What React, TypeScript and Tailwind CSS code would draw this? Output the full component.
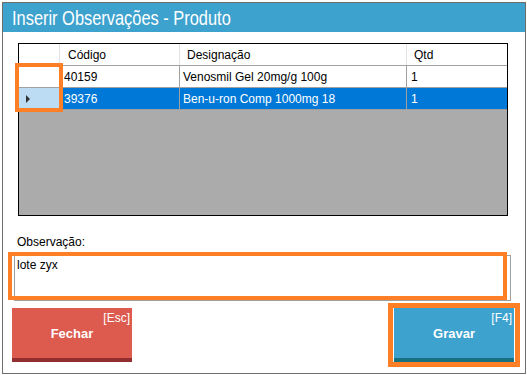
const rows = [
  { codigo: "40159", designacao: "Venosmil Gel 20mg/g 100g", qtd: "1", selected: false },
  { codigo: "39376", designacao: "Ben-u-ron Comp 1000mg 18", qtd: "1", selected: true },
];

function ActionButton({ label, hotkey, color }: { label: string; hotkey: string; color: "red" | "blue" }) {
  const tone =
    color === "red"
      ? "bg-[#dc5a4e] border-[#922d30]"
      : "bg-[#3da2ce] border-[#17717f]";
  return (
    <button className={`relative w-[120px] h-[54px] border-b-4 ${tone} text-white`}>
      <span className="absolute top-[3px] right-[2px] text-[12px] leading-[14px]">{hotkey}</span>
      <span className="block pt-[2px] text-[13px] font-bold leading-[16px]">{label}</span>
    </button>
  );
}

export default function App() {
  return (
    <div className="w-[527px] h-[375px] bg-white pt-[2px] pl-[2px] font-['Liberation_Sans',Arial,sans-serif] text-black">
      <div className="relative w-[524px] h-[372px] border border-[#6f6f6f] flex flex-col">
        {/* Title (narrow face, squeezed since Arial Narrow isn't available) */}
        <div className="h-[29px] bg-[#3da2ce] pl-[9px] flex items-center">
          <span className="inline-block origin-left scale-x-[0.82] whitespace-nowrap text-white text-[20px] leading-[24px]">
            Inserir Observações - Produto
          </span>
        </div>

        {/* Grid */}
        <div className="ml-[15px] mt-[11px] w-[490px] h-[173px] border border-black bg-[#ababab] text-[12px]">
          <div className="flex h-[22px] bg-white border-b border-[#a0a0a0]">
            <div className="w-[41px] border-r border-[#e3e3e3]" />
            <div className="w-[120px] border-r border-[#e3e3e3] pl-[8px] flex items-center">Código</div>
            <div className="w-[227px] border-r border-[#e3e3e3] pl-[7px] flex items-center">Designação</div>
            <div className="w-[100px] pl-[7px] flex items-center">Qtd</div>
          </div>
          {rows.map((r) => (
            <div
              key={r.codigo}
              className={`flex h-[22px] border-b border-[#a0a0a0] ${r.selected ? "bg-[#0078d7] text-white" : "bg-white"}`}
            >
              <div className={`w-[41px] border-r border-[#a0a0a0] flex items-center pl-[6px] ${r.selected ? "bg-[#bcdcf4]" : "bg-white"}`}>
                {r.selected && (
                  <svg width="6" height="10" viewBox="0 0 6 10">
                    <path d="M1 1 L5 5 L1 9 Z" fill="#333" />
                  </svg>
                )}
              </div>
              <div className="w-[120px] border-r border-[#a0a0a0] pl-[4px] flex items-center">{r.codigo}</div>
              <div className="w-[227px] border-r border-[#a0a0a0] pl-[3px] flex items-center">{r.designacao}</div>
              <div className="w-[100px] pl-[4px] flex items-center">{r.qtd}</div>
            </div>
          ))}
        </div>

        {/* Observation */}
        <label className="ml-[14px] mt-[19px] text-[12px] leading-[14px]">Observação:</label>
        <div className="ml-[11px] mt-[6px] w-[497px] h-[46px] border border-[#a0a0a0] pl-[2px] pt-[2px] text-[12px] leading-[14px]">
          lote zyx
        </div>

        {/* Buttons */}
        <div className="mt-[7px] ml-[9px] mr-[11px] flex justify-between">
          <ActionButton label="Fechar" hotkey="[Esc]" color="red" />
          <ActionButton label="Gravar" hotkey="[F4]" color="blue" />
        </div>

        {/* Highlight annotations */}
        <div className="absolute left-[12px] top-[60px] w-[48px] h-[49px] border-4 border-[#ff7f27]" />
        <div className="absolute left-[5px] top-[249px] w-[499px] h-[48px] border-4 border-[#ff7f27]" />
        <div className="absolute left-[385px] top-[300px] w-[132px] h-[64px] border-[5px] border-[#ff7f27]" />
      </div>
    </div>
  );
}
